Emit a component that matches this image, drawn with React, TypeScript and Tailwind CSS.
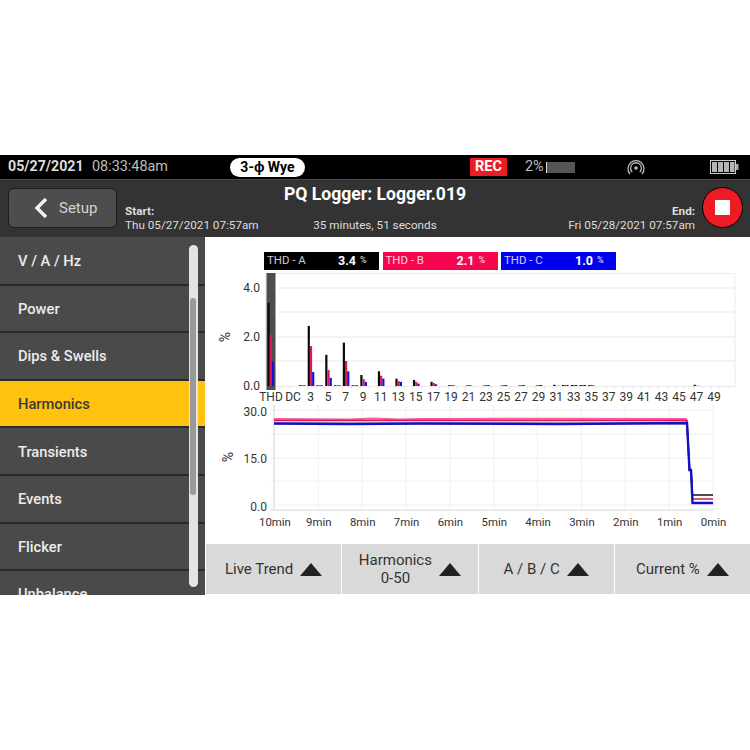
import React, { FC } from "react";

const menuItems = ["V / A / Hz", "Power", "Dips & Swells", "Harmonics", "Transients", "Events", "Flicker", "Unbalance"];

// harmonic order -> [A, B, C] in percent
const harmonics: Array<[number, number, number, number]> = [
  [2, 0.03, 0.03, 0.03],
  [3, 2.45, 1.63, 0.57],
  [4, 0.03, 0.03, 0.03],
  [5, 1.27, 0.65, 0.33],
  [6, 0.03, 0.03, 0.03],
  [7, 1.77, 1.02, 0.6],
  [8, 0.03, 0.03, 0.03],
  [9, 0.45, 0.28, 0.17],
  [11, 0.6, 0.42, 0.3],
  [13, 0.3, 0.2, 0.17],
  [15, 0.25, 0.17, 0.1],
  [17, 0.17, 0.12, 0.07],
  [19, 0.03, 0.04, 0.03],
  [21, 0.02, 0.04, 0.02],
  [23, 0.02, 0.04, 0.04],
  [25, 0.02, 0.04, 0.04],
  [27, 0.02, 0.04, 0.04],
  [29, 0.02, 0.04, 0.04],
  [31, 0.05, 0.01, 0.01],
  [32, 0.04, 0.04, 0.04],
  [33, 0.04, 0.04, 0.04],
  [34, 0.04, 0.04, 0.04],
  [35, 0.04, 0.04, 0.02],
  [47, 0.05, 0.01, 0.01],
];

const FONT = "Roboto, sans-serif";
const oddOrders = Array.from({ length: 24 }, (_, i) => 3 + i * 2);
const harmonicX = (n: number) => 307.7 + (n - 3) * 8.77;
const barY = (value: number) => 386 - value * 24.5;

const Bars: FC<{ x: number; values: [number, number, number] }> = ({ x, values }) => (
  <>
    <rect x={x} y={barY(values[0])} width={2.2} height={386 - barY(values[0])} fill="#0a0a0a" />
    <rect x={x + 2.2} y={barY(values[1])} width={2.2} height={386 - barY(values[1])} fill="#e0174f" />
    <rect x={x + 4.4} y={barY(values[2])} width={2.2} height={386 - barY(values[2])} fill="#1010e0" />
  </>
);

const HarmonicsChart: FC = () => (
  <svg viewBox="205 270 545 134" className="w-[545px] h-[134px] block" style={{ fontFamily: FONT }}>
    <rect x={265.5} y={273.5} width={469.5} height={113} fill="none" stroke="#ececec" />
    {[288, 312, 337, 361].map((y) => (
      <line key={y} x1={277} x2={735} y1={y} y2={y} stroke="#e8e8e8" />
    ))}
    {Array.from({ length: 52 }, (_, i) => (
      <line key={i} x1={281.4 + i * 8.77} x2={281.4 + i * 8.77} y1={386} y2={389} stroke="#e4e4e4" />
    ))}
    <rect x={266.5} y={273} width={9} height={117} fill="#4d4d4d" />
    <Bars x={267.5} values={[3.4, 2.1, 1.0]} />
    {harmonics.map(([n, a, b, c]) => (
      <Bars key={n} x={harmonicX(n)} values={[a, b, c]} />
    ))}
    <g fontSize={12} fill="#333" textAnchor="end">
      <text x={260} y={292}>4.0</text>
      <text x={260} y={341}>2.0</text>
      <text x={260} y={390}>0.0</text>
    </g>
    <text transform="translate(230 337) rotate(-90)" fontSize={14} fill="#333" textAnchor="middle">%</text>
    <g fontSize={12} fill="#333" textAnchor="middle">
      <text x={271} y={401}>THD</text>
      <text x={293} y={401}>DC</text>
      {oddOrders.map((n) => (
        <text key={n} x={310.6 + (n - 3) * 8.77} y={401}>{n}</text>
      ))}
    </g>
  </svg>
);

const minuteLabels = ["10min", "9min", "8min", "7min", "6min", "5min", "4min", "3min", "2min", "1min", "0min"];
const minuteX = (i: number) => 274.5 + i * 43.85;

const TrendChart: FC = () => (
  <svg viewBox="205 404 545 140" className="w-[545px] h-[140px] block" style={{ fontFamily: FONT }}>
    {[410, 434, 458, 481, 505].map((y) => (
      <line key={y} x1={270} x2={713} y1={y} y2={y} stroke="#f0f0f0" />
    ))}
    {minuteLabels.map((_, i) => (
      <line key={i} x1={minuteX(i)} x2={minuteX(i)} y1={405} y2={510} stroke="#f0f0f0" />
    ))}
    <line x1={274} x2={274} y1={405} y2={510} stroke="#e4e4e4" strokeWidth={1.5} />
    <line x1={270} x2={713} y1={510} y2={510} stroke="#e4e4e4" strokeWidth={1.5} />
    <polyline points="274,419 350,419.5 372,418.5 400,419.5 420,419 560,418.7 687,419" fill="none" stroke="#f2609a" strokeWidth={2} />
    <polyline points="274,420.5 687,420.5 689.5,470 691,470 692.5,499 713,499" fill="none" stroke="#e0174f" strokeWidth={1.6} />
    <polyline points="274,423.5 687,423.5 689.5,470 691,470 692.5,495 713,495" fill="none" stroke="#111" strokeWidth={1.6} />
    <polyline points="274,423.5 350,424 420,423.5 560,424 687,423 689.5,470 691,470 692.5,503 713,503" fill="none" stroke="#1410c8" strokeWidth={2.4} />
    <g fontSize={12} fill="#333" textAnchor="end">
      <text x={267} y={416}>30.0</text>
      <text x={267} y={463}>15.0</text>
      <text x={267} y={511}>0.0</text>
    </g>
    <text transform="translate(233 457) rotate(-90)" fontSize={14} fill="#333" textAnchor="middle">%</text>
    <g fontSize={11.4} fill="#333" textAnchor="middle">
      {minuteLabels.map((label, i) => (
        <text key={label} x={minuteX(i) + 0.5} y={526}>{label}</text>
      ))}
    </g>
  </svg>
);

const LegendChip: FC<{ label: string; value: string; className: string }> = ({ label, value, className }) => (
  <div className={`w-[115px] h-[18px] flex items-center pl-[3px] text-[11.4px] ${className}`}>
    <span className="w-[71px] opacity-80">{label}</span>
    <span className="font-bold text-[12.5px]">{value}</span>
    <span className="ml-1 text-[9px] font-medium opacity-80">%</span>
  </div>
);

const DropButton: FC<{ lines: string[] }> = ({ lines }) => (
  <button className="flex-1 h-[50px] bg-[#d9d9d9] flex items-center justify-center gap-[7px] text-[15px] leading-[17.5px] text-[#333] font-normal">
    <span className="text-center mt-px">
      {lines.map((line) => (
        <span key={line} className="block">{line}</span>
      ))}
    </span>
    <svg width="22" height="13" viewBox="0 0 22 13">
      <polygon points="11,0 22,13 0,13" fill="#222" />
    </svg>
  </button>
);

const App: FC = () => {
  return (
    <div className="w-[750px] h-[750px] bg-white pt-[155px] overflow-hidden" style={{ fontFamily: FONT }}>
      {/* status bar */}
      <div className="h-[24px] bg-black flex items-center text-[14.4px] text-[#bdbdbd]">
        <span className="ml-2 w-[76px] font-bold text-[14.2px] text-[#dddddd] whitespace-nowrap">05/27/2021</span>
        <span className="ml-2 w-[138px]">08:33:48am</span>
        <span className="w-[75px] h-[19px] rounded-full bg-white text-black font-bold text-[14px] flex items-center justify-center">3-ϕ Wye</span>
        <span className="ml-[165px] w-[37px] h-[18px] bg-[#ed1c24] text-white font-bold text-[14.5px] flex items-center justify-center">REC</span>
        <span className="ml-[18px] w-[21px]">2%</span>
        <span className="w-[29px] h-[11px] bg-[#555555] border-l border-[#dddddd]" />
        <svg className="ml-[52px]" width="18" height="16" viewBox="0 0 18 16" fill="none" stroke="#bdbdbd" strokeWidth="1.3">
          <circle cx="9" cy="9" r="1.8" fill="#bdbdbd" stroke="none" />
          <path d="M5.2 13 A5.4 5.4 0 1 1 12.8 13" />
          <path d="M3 15 A8 8 0 1 1 15 15" />
        </svg>
        <svg className="ml-[65px]" width="29" height="14" viewBox="0 0 29 14">
          <rect x="0.5" y="0.5" width="25" height="13" fill="none" stroke="#cccccc" />
          <rect x="2" y="2" width="5" height="10" fill="#b5b5b5" />
          <rect x="8" y="2" width="5" height="10" fill="#b5b5b5" />
          <rect x="14" y="2" width="5" height="10" fill="#b5b5b5" />
          <rect x="20" y="2" width="4.5" height="10" fill="#b5b5b5" />
          <rect x="26" y="4" width="2.5" height="6" fill="#aaaaaa" />
        </svg>
      </div>

      {/* header */}
      <div className="h-[58px] bg-[#333333] flex items-end border-t border-[#4a4a4a] text-[#dedede] text-[11.7px] leading-[14px]">
        <div className="w-[284px] flex items-end self-stretch pb-[5px]">
          <button className="ml-2 mb-[4px] w-[109px] h-[40px] rounded-md bg-[#4d4d4d] border border-[#1e1e1e] flex items-center pl-6 gap-[10px] text-[15px] text-[#d4d4d4]">
            <svg width="16" height="22" viewBox="0 0 16 22" fill="none" stroke="#f2f2f2" strokeWidth="3.4">
              <path d="M13 2 L4 11 L13 20" />
            </svg>
            Setup
          </button>
          <div className="ml-2 whitespace-nowrap">
            <div className="font-bold">Start:</div>
            <div>Thu 05/27/2021 07:57am</div>
          </div>
        </div>
        <div className="w-[182px] self-stretch flex flex-col items-center justify-between pb-[5px] whitespace-nowrap">
          <div className="text-[17.6px] leading-[22px] mt-[3px] font-bold text-white">PQ Logger: Logger.019</div>
          <div>35 minutes, 51 seconds</div>
        </div>
        <div className="flex-1 flex items-end self-stretch justify-end pb-[5px] text-right whitespace-nowrap">
          <div>
            <div className="font-bold">End:</div>
            <div>Fri 05/28/2021 07:57am</div>
          </div>
          <div className="ml-[7px] mr-[7px] mb-[4px] w-[41px] h-[41px] rounded-full bg-[#ed1c24] border border-black flex items-center justify-center">
            <div className="w-[15px] h-[15px] bg-white" />
          </div>
        </div>
      </div>

      <div className="h-[358px] flex">
        {/* side menu */}
        <div className="relative w-[205px] h-full bg-[#4a4a4a] overflow-hidden pt-px">
          {menuItems.map((item) => (
            <div
              key={item}
              className={`h-[47.6px] pl-[18px] pt-px flex items-center border-b-2 border-[#2a2a2a] text-[14.7px] font-medium ${
                item === "Harmonics" ? "bg-[#ffc20e] text-[#3a3a3a]" : "text-[#ececec]"
              }`}
            >
              {item}
            </div>
          ))}
          <div className="absolute left-[189px] top-[8px] w-[9px] h-[342px] rounded-full bg-[#e4e4e4]" />
          <div className="absolute left-[190px] top-[61px] w-[6px] h-[197px] rounded-full bg-[#999999]" />
        </div>

        {/* charts and drop-up buttons */}
        <div className="flex-1 flex flex-col">
          <div className="h-[33px] pt-[15px] pl-[59px] flex gap-[3.5px] text-white">
            <LegendChip label="THD - A" value="3.4" className="bg-black" />
            <LegendChip label="THD - B" value="2.1" className="bg-[#f5064f]" />
            <LegendChip label="THD - C" value="1.0" className="bg-[#0000f0]" />
          </div>
          <HarmonicsChart />
          <TrendChart />
          <div className="flex gap-px pl-px">
            <DropButton lines={["Live Trend"]} />
            <DropButton lines={["Harmonics", "0-50"]} />
            <DropButton lines={["A / B / C"]} />
            <DropButton lines={["Current %"]} />
          </div>
        </div>
      </div>
    </div>
  );
};

export default App;
